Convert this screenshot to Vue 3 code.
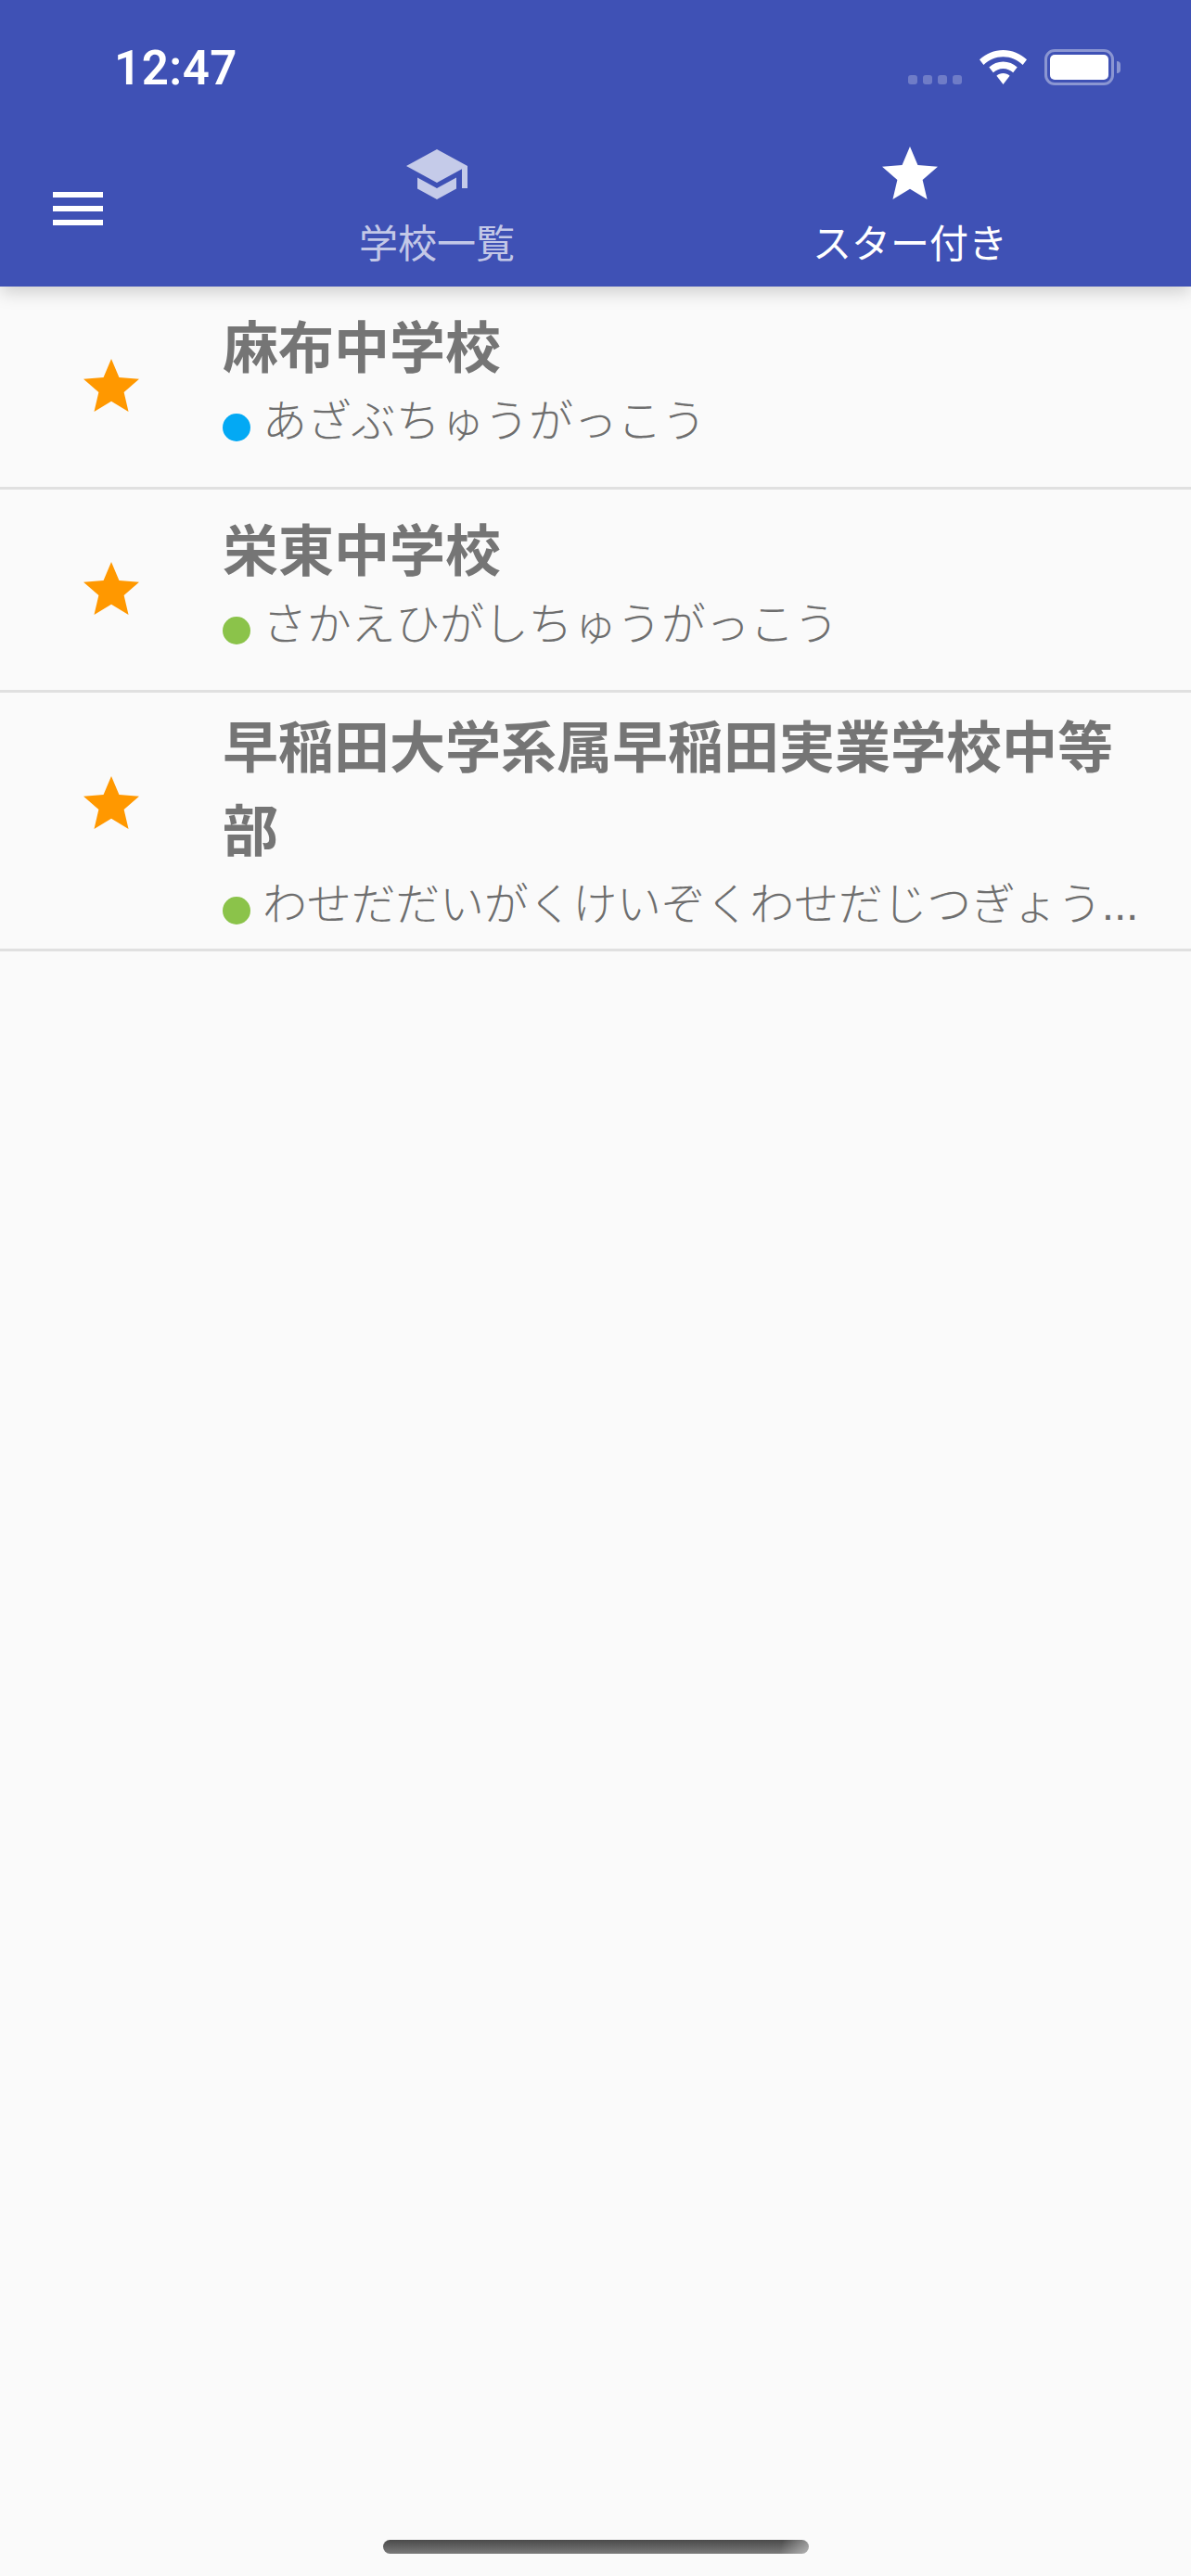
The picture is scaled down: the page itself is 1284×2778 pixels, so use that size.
<script setup>
const schools = [
  { name: '麻布中学校', kana: 'あざぶちゅうがっこう', color: '#03a9f4', tall: false },
  { name: '栄東中学校', kana: 'さかえひがしちゅうがっこう', color: '#8bc34a', tall: false },
  { name: '早稲田大学系属早稲田実業学校中等部', kana: 'わせだだいがくけいぞくわせだじつぎょう...', color: '#8bc34a', tall: true },
]
const starPath = 'M12 17.27L18.18 21l-1.64-7.03L22 9.24l-7.19-.61L12 2 9.19 8.63 2 9.24l5.46 4.73L5.82 21z'
</script>

<template>
  <div class="screen">
    <header class="header">
      <div class="status">
        <span class="time">12:47</span>
        <div class="status-icons">
          <div class="signal"><i></i><i></i><i></i><i></i></div>
          <svg class="wifi" viewBox="0 0 51 37" width="51" height="37">
            <path d="M25.5 0C35 0 44 3.8 51 10.3l-4.4 5.6C40.8 10.4 33.4 7.2 25.5 7.2S10.200 10.400 4.400 15.900L0 10.300C7 3.800 16 0 25.500 0z" fill="#fff"/>
            <path d="M25.500 12.500c5.700 0 11 2.200 15.200 6l-4.500 5.700c-2.900-2.700-6.700-4.300-10.700-4.300s-7.800 1.600-10.700 4.300l-4.500-5.700c4.200-3.800 9.500-6 15.200-6z" fill="#fff"/>
            <path d="M25.500 25c2.700 0 5.200 1 7.100 2.800L25.500 37l-7.100-9.200c1.900-1.800 4.400-2.800 7.100-2.800z" fill="#fff"/>
          </svg>
          <div class="battery"><div class="battery-fill"></div><div class="battery-nub"></div></div>
        </div>
      </div>
      <div class="nav">
        <div class="menu">
          <svg viewBox="0 0 24 24" width="72" height="72"><path fill="#fff" d="M3 18h18v-2H3v2zm0-5h18v-2H3v2zm0-7v2h18V6H3z"/></svg>
        </div>
        <div class="tabs">
          <div class="tab">
            <svg viewBox="0 0 24 24" width="72" height="72"><path fill="currentColor" d="M5 13.180v4L12 21l7-3.820v-4L12 17l-7-3.820zM12 3L1 9l11 6 9-4.910V17h2V9L12 3z"/></svg>
            <span class="tab-label">学校一覧</span>
          </div>
          <div class="tab active">
            <svg viewBox="0 0 24 24" width="72" height="72"><path fill="currentColor" :d="starPath"/></svg>
            <span class="tab-label">スター付き</span>
          </div>
        </div>
      </div>
    </header>

    <ul class="list">
      <li v-for="s in schools" :key="s.name" class="row" :class="{ tall: s.tall }">
        <svg class="star" viewBox="0 0 24 24" width="72" height="72"><path fill="#ff9800" :d="starPath"/></svg>
        <div class="body">
          <div class="title">{{ s.name }}</div>
          <div class="sub">
            <span class="dot" :style="{ background: s.color }"></span>
            <span class="kana">{{ s.kana }}</span>
          </div>
        </div>
      </li>
    </ul>

    <div class="home"></div>
  </div>
</template>

<style>
html, body { margin: 0; background: #fafafa; }
</style>

<style scoped>
.screen {
  position: relative;
  width: 1284px;
  height: 2778px;
  overflow: hidden;
  background: #fafafa;
  font-family: "Liberation Sans", "Noto Sans CJK JP", sans-serif;
}
.header {
  position: relative;
  z-index: 1;
  height: 309px;
  background: #3f51b5;
  box-shadow: 0 6px 18px rgba(0, 0, 0, 0.18);
  color: #fff;
}
.status {
  height: 152px;
  box-sizing: border-box;
  padding: 44px 83px 0 123px;
  display: flex;
  justify-content: space-between;
  align-items: flex-start;
}
.time {
  font-family: Roboto, sans-serif;
  font-weight: 600;
  font-size: 51px;
  line-height: 60px;
  letter-spacing: 0.5px;
}
.status-icons {
  display: flex;
  align-items: flex-start;
  margin-top: 9px;
}
.signal {
  display: flex;
  gap: 6px;
  margin-top: 28px;
  margin-right: 19px;
}
.signal i {
  width: 10px;
  height: 10px;
  border-radius: 3px;
  background: rgba(255, 255, 255, 0.25);
}
.wifi { margin-top: 1px; margin-right: 19px; }
.battery {
  position: relative;
  box-sizing: border-box;
  width: 75px;
  height: 39px;
  border: 3px solid rgba(255, 255, 255, 0.4);
  border-radius: 11px;
  padding: 3px;
}
.battery-fill {
  height: 100%;
  background: #fff;
  border-radius: 5px;
}
.battery-nub {
  position: absolute;
  left: 75px;
  top: 10px;
  width: 4px;
  height: 13px;
  background: rgba(255, 255, 255, 0.4);
  border-radius: 0 4px 4px 0;
}
.nav {
  display: flex;
  height: 157px;
}
.menu {
  width: 216px;
  box-sizing: border-box;
  padding: 37px 0 0 48px;
}
.menu svg { display: block; }
.tabs {
  width: 1020px;
  display: flex;
}
.tab {
  flex: 1;
  display: flex;
  flex-direction: column;
  align-items: center;
  color: rgba(255, 255, 255, 0.7);
}
.tab svg { display: block; }
.tab.active { color: #fff; }
.tab-label {
  font-size: 42px;
  line-height: 80px;
}
.list {
  list-style: none;
  margin: 0;
  padding: 0;
}
.row {
  display: flex;
  box-sizing: border-box;
  min-height: 219px;
  border-bottom: 3px solid #e0e0e0;
  padding: 23px 0 0;
}
.row.tall {
  padding: 16px 0 19px;
}
.star {
  flex: none;
  margin: 49px 84px 0;
}
.row.tall .star { margin-top: 68px; }
.body {
  flex: 1;
  min-width: 0;
  padding-right: 30px;
}
.title {
  font-size: 60px;
  line-height: 90px;
  font-weight: 700;
  color: #757575;
}
.sub {
  display: flex;
  align-items: flex-start;
  margin-top: 5px;
}
.dot {
  flex: none;
  width: 30px;
  height: 30px;
  margin: 19px 13px 0 0;
  border-radius: 50%;
}
.kana {
  flex: 1;
  min-width: 0;
  font-size: 48px;
  line-height: 56px;
  font-weight: 300;
  letter-spacing: -0.25px;
  color: #6e6e6e;
  white-space: nowrap;
}
.home {
  position: absolute;
  left: 413px;
  top: 2739px;
  width: 459px;
  height: 15px;
  border-radius: 8px;
  background:
    linear-gradient(105deg, rgba(250, 250, 250, 0) 93%, rgba(250, 250, 250, 0.45) 100%),
    linear-gradient(180deg, #4a4a4a, #7a7a7a);
}
</style>
